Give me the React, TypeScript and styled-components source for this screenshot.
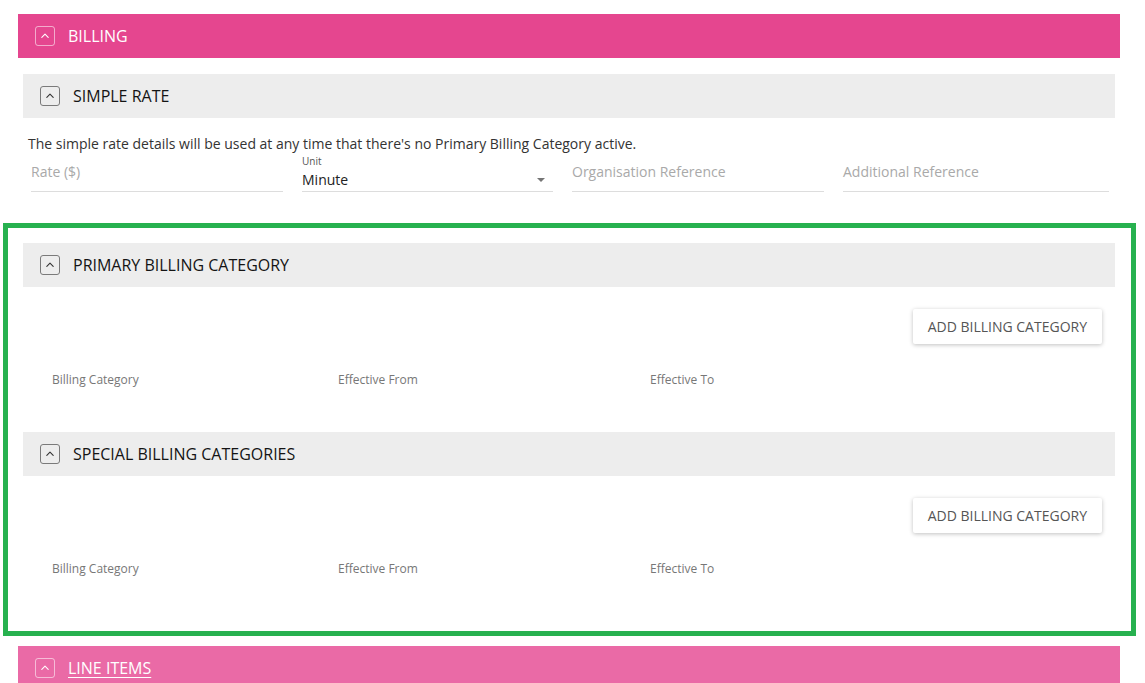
import React from 'react';
import styled, { createGlobalStyle } from 'styled-components';

const GlobalStyle = createGlobalStyle`
  body {
    margin: 0;
    background: #ffffff;
    font-family: 'Open Sans', 'Noto Sans', sans-serif;
    color: #333333;
  }
`;

type Tone = 'pink' | 'gray';

const ToggleIcon = ({ tone }: { tone: Tone }) => (
  <S.IconBox $tone={tone}>
    <svg width="12" height="12" viewBox="0 0 12 12">
      <polyline
        points="2.8,7.3 6,4.1 9.2,7.3"
        fill="none"
        stroke={tone === 'pink' ? '#ffffff' : '#333333'}
        strokeWidth="1.1"
        strokeLinecap="round"
        strokeLinejoin="round"
      />
    </svg>
  </S.IconBox>
);

const columns = ['Billing Category', 'Effective From', 'Effective To'];

const CategorySection = ({ title }: { title: string }) => (
  <S.Section>
    <S.SubHeader>
      <ToggleIcon tone="gray" />
      <S.SubTitle>{title}</S.SubTitle>
    </S.SubHeader>
    <S.ButtonRow>
      <S.AddButton>Add Billing Category</S.AddButton>
    </S.ButtonRow>
    <S.ColumnRow>
      {columns.map((col) => (
        <S.ColumnLabel key={col}>{col}</S.ColumnLabel>
      ))}
    </S.ColumnRow>
  </S.Section>
);

const App = () => {
  return (
    <>
      <GlobalStyle />
      <S.Page>
        <S.MainHeader $shade="#e5468f">
          <ToggleIcon tone="pink" />
          <S.MainTitle>BILLING</S.MainTitle>
        </S.MainHeader>

        <S.Body>
          <S.SubHeader>
            <ToggleIcon tone="gray" />
            <S.SubTitle>SIMPLE RATE</S.SubTitle>
          </S.SubHeader>
          <S.Description>
            The simple rate details will be used at any time that there's no Primary Billing Category
            active.
          </S.Description>
          <S.FieldRow>
            <S.Field>
              <S.Placeholder>Rate ($)</S.Placeholder>
            </S.Field>
            <S.Field>
              <S.FieldLabel>Unit</S.FieldLabel>
              <S.SelectValue>
                Minute
                <S.Caret />
              </S.SelectValue>
            </S.Field>
            <S.Field>
              <S.Placeholder>Organisation Reference</S.Placeholder>
            </S.Field>
            <S.Field>
              <S.Placeholder>Additional Reference</S.Placeholder>
            </S.Field>
          </S.FieldRow>

          <S.Highlight>
            <CategorySection title="PRIMARY BILLING CATEGORY" />
            <CategorySection title="SPECIAL BILLING CATEGORIES" />
          </S.Highlight>
        </S.Body>

        <S.MainHeader $shade="#ea6aa6">
          <ToggleIcon tone="pink" />
          <S.MainTitle $link>LINE ITEMS</S.MainTitle>
        </S.MainHeader>
      </S.Page>
    </>
  );
};

export default App;

const S = {
  Page: styled.div`
    width: 1102px;
    padding: 14px 0 0 18px;
    display: flex;
    flex-direction: column;
  `,

  MainHeader: styled.div<{ $shade: string }>`
    display: flex;
    align-items: center;
    gap: 13px;

    height: 44px;
    padding-left: 17px;

    background-color: ${({ $shade }) => $shade};
  `,

  MainTitle: styled.span<{ $link?: boolean }>`
    font-size: 16px;
    color: #ffffff;
    text-decoration: ${({ $link }) => ($link ? 'underline' : 'none')};
    text-underline-offset: 3px;
  `,

  IconBox: styled.div<{ $tone: Tone }>`
    display: flex;
    justify-content: center;
    align-items: center;

    width: 18px;
    height: 18px;
    border-radius: 3px;
    border: 1px solid ${({ $tone }) => ($tone === 'pink' ? 'rgba(255, 255, 255, 0.55)' : '#7a7a7a')};
  `,

  Body: styled.div`
    display: flex;
    flex-direction: column;
    padding: 16px 5px 0;
  `,

  SubHeader: styled.div`
    display: flex;
    align-items: center;
    gap: 13px;

    height: 44px;
    padding-left: 17px;

    background-color: #ededed;
  `,

  SubTitle: styled.span`
    font-size: 16px;
    color: #141414;
  `,

  Description: styled.div`
    margin-top: 16px;
    padding-left: 5px;

    font-size: 14px;
    line-height: 20px;
    color: #333333;
  `,

  FieldRow: styled.div`
    display: grid;
    grid-template-columns: 252px 251px 252px 266px;
    column-gap: 19px;
    padding-left: 8px;
  `,

  Field: styled.div`
    display: flex;
    flex-direction: column;
    justify-content: flex-end;

    height: 37px;
    border-bottom: 1px solid #dddddd;
  `,

  Placeholder: styled.div`
    padding-bottom: 9px;

    font-size: 14px;
    line-height: 20px;
    color: #a9a9a9;
  `,

  FieldLabel: styled.div`
    margin-bottom: 3px;

    font-size: 10px;
    line-height: 12px;
    color: #555555;
  `,

  SelectValue: styled.div`
    display: flex;
    justify-content: space-between;
    align-items: center;

    padding-right: 8px;
    padding-bottom: 1px;

    font-size: 14px;
    line-height: 20px;
    color: #222222;
  `,

  Caret: styled.span`
    width: 0;
    height: 0;
    border-left: 4px solid transparent;
    border-right: 4px solid transparent;
    border-top: 4px solid #757575;
  `,

  Highlight: styled.div`
    display: flex;
    flex-direction: column;

    margin: 31px -21px 10px -20px;
    padding: 15px 16px 10px 15px;

    border: 5px solid #27b14f;
  `,

  Section: styled.div`
    display: flex;
    flex-direction: column;
    padding-bottom: 44px;
  `,

  ButtonRow: styled.div`
    display: flex;
    justify-content: flex-end;
    padding: 22px 13px 0 0;
  `,

  AddButton: styled.button`
    height: 35px;
    padding: 0 15px;

    border: none;
    border-radius: 2px;
    background-color: #ffffff;
    box-shadow: 0 1px 4px rgba(0, 0, 0, 0.25);

    font-family: 'Open Sans', sans-serif;
    font-size: 14px;
    text-transform: uppercase;
    color: #555555;
  `,

  ColumnRow: styled.div`
    display: grid;
    grid-template-columns: 286px 312px 1fr;
    padding: 28px 0 0 29px;
  `,

  ColumnLabel: styled.div`
    font-size: 12px;
    line-height: 16px;
    color: #777777;
  `,
};
